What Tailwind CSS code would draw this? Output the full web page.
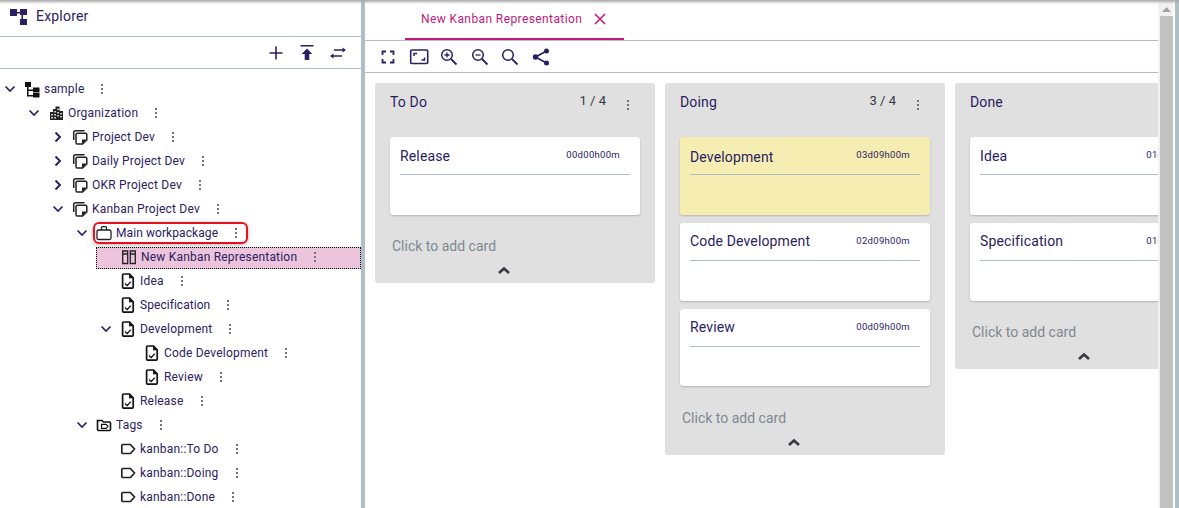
<!DOCTYPE html>
<html lang="en">
<head>
<meta charset="utf-8">
<title>Kanban</title>
<script src="https://cdn.jsdelivr.net/npm/@tailwindcss/browser@4"></script>
</head>
<body class="bg-white overflow-hidden">
<svg width="0" height="0" class="absolute">
  <defs>
    <symbol id="down" viewBox="0 0 12 12"><path d="M1.500 3.500 6 8l4.500-4.500" fill="none" stroke="#2b2162" stroke-width="1.700"/></symbol>
    <symbol id="right" viewBox="0 0 12 12"><path d="M3.500 1.500 8 6l-4.500 4.500" fill="none" stroke="#2b2162" stroke-width="2"/></symbol>
    <symbol id="dots" viewBox="0 0 4 12"><rect x="1" y="1" width="2" height="2" fill="#757575"/><rect x="1" y="5" width="2" height="2" fill="#757575"/><rect x="1" y="9" width="2" height="2" fill="#757575"/></symbol>
    <symbol id="project" viewBox="0 0 16 16"><g fill="none" stroke="#212121" stroke-width="1.500"><path d="M12.500 1.700H3.500Q1.700 1.700 1.700 3.500V11"/><path d="M4 8V5.500Q4 4.200 5.300 4.200H13.500Q14.800 4.200 14.800 5.500V11L10.500 15H5.300Q4 15 4 13.700V8Z"/></g><path d="M10 15v-4.500h4.800Z" fill="#212121"/></symbol>
    <symbol id="task" viewBox="0 0 16 16"><path d="M3.800 1H9.500L13.200 4.800V14Q13.200 15.200 12 15.200H3.800Q2.600 15.200 2.600 14V2.200Q2.600 1 3.800 1Z" fill="none" stroke="#111" stroke-width="1.700"/><path d="M9 1v4.300h4.300Z" fill="#111"/><path d="M5 10.500 7.100 12.500 11 8.600" fill="none" stroke="#111" stroke-width="1.300"/></symbol>
    <symbol id="tag" viewBox="0 0 16 16"><path d="M2.800 3.500H10.500L14.500 8 10.500 12.500H2.800Q1.800 12.500 1.800 11.500V4.500Q1.800 3.500 2.800 3.500Z" fill="none" stroke="#212121" stroke-width="1.700"/></symbol>
    <symbol id="chev-up" viewBox="0 0 14 10"><path d="M2 8 7 3.500 12 8" fill="none" stroke="#37373f" stroke-width="2.600"/></symbol>
  </defs>
</svg>

<div class="relative flex h-[508px] w-[1179px] overflow-hidden font-['Roboto',sans-serif] text-[#2b2162]">
  <div class="absolute inset-x-0 top-0 z-10 h-1 bg-gradient-to-b from-[#a8a8a8] to-white/0"></div>

  <!-- Left panel -->
  <aside class="flex h-full w-[361px] shrink-0 flex-col">
    <div class="flex h-[37px] shrink-0 items-center border-b border-[#b0bec5] pb-[3px] pl-[9px]">
      <svg width="18" height="18" viewBox="0 0 18 18" class="shrink-0">
        <path d="M1 1h7v7h-7z M11 1h7v6h-7z M11 11h7v6h-7z M8 4h3v1.500H8z M12.500 7h1.500v4h-1.500z" fill="#2b2162"/>
      </svg>
      <span class="mb-[2px] ml-[9px] text-sm tracking-[0.2px]">Explorer</span>
    </div>
    <div class="flex h-8 shrink-0 items-center justify-end gap-[15px] border-b border-[#b0bec5] pr-[15px]">
      <svg width="16" height="16" viewBox="0 0 16 16"><path d="M8 1.500v13M1.500 8h13" stroke="#2b2162" stroke-width="1.600"/></svg>
      <svg width="16" height="16" viewBox="0 0 16 16"><path d="M1.500 0h13v1.600h-13zM8 3.500l5.300 5.500H10.300V15H5.700V9H2.700Z" fill="#2b2162"/></svg>
      <svg width="16" height="16" viewBox="0 0 16 16"><path d="M4 5h9M3 11h9" stroke="#2b2162" stroke-width="1.600"/><path d="M12.500 2.500 16 5l-3.500 2.500ZM3.500 8.500 0 11l3.500 2.500Z" fill="#2b2162"/></svg>
    </div>

    <div class="flex min-h-0 flex-col pt-2 text-xs tracking-[0.2px]">
      <!-- sample -->
      <div class="flex h-6 shrink-0 items-center pl-1">
        <svg width="12" height="12" class="shrink-0"><use href="#down"/></svg>
        <svg width="16" height="17" viewBox="0 0 16 17" class="ml-2 shrink-0"><path d="M1 1h6v5H1zM9 6.500h6.500v5H9zM9 12h6.500v4.500H9zM3 6h1.500v8H9v1.500H3zM4.500 8.500H9V10H4.500z" fill="#111"/></svg>
        <span class="ml-1">sample</span><svg width="4" height="12" class="ml-4 shrink-0"><use href="#dots"/></svg>
      </div>
      <!-- Organization -->
      <div class="flex h-6 shrink-0 items-center pl-7">
        <svg width="12" height="12" class="shrink-0"><use href="#down"/></svg>
        <svg width="16" height="16" viewBox="0 0 16 16" class="ml-2 shrink-0"><path d="M2 7h3V4h2.500V1.500h4V6H15v9H2ZM3.300 9v1.500h1.500V9ZM3.300 12v1.500h1.500V12ZM6.300 6v1.500h1.500V6ZM6.300 9v1.500h1.500V9ZM6.300 12v1.500h1.500V12ZM9.300 3.500V5h1.500V3.500ZM9.300 7v1.500h1.500V7ZM9.300 10v1.500h1.500V10ZM12.300 8v1.500h1.500V8ZM12.300 11v1.500h1.500V11Z" fill="#212121" fill-rule="evenodd"/></svg>
        <span class="ml-1">Organization</span><svg width="4" height="12" class="ml-4 shrink-0"><use href="#dots"/></svg>
      </div>
      <!-- Projects -->
      <div class="flex h-6 shrink-0 items-center pl-[52px]">
        <svg width="12" height="12" class="shrink-0"><use href="#right"/></svg>
        <svg width="16" height="16" class="ml-2 shrink-0"><use href="#project"/></svg>
        <span class="ml-1">Project Dev</span><svg width="4" height="12" class="ml-4 shrink-0"><use href="#dots"/></svg>
      </div>
      <div class="flex h-6 shrink-0 items-center pl-[52px]">
        <svg width="12" height="12" class="shrink-0"><use href="#right"/></svg>
        <svg width="16" height="16" class="ml-2 shrink-0"><use href="#project"/></svg>
        <span class="ml-1">Daily Project Dev</span><svg width="4" height="12" class="ml-4 shrink-0"><use href="#dots"/></svg>
      </div>
      <div class="flex h-6 shrink-0 items-center pl-[52px]">
        <svg width="12" height="12" class="shrink-0"><use href="#right"/></svg>
        <svg width="16" height="16" class="ml-2 shrink-0"><use href="#project"/></svg>
        <span class="ml-1">OKR Project Dev</span><svg width="4" height="12" class="ml-4 shrink-0"><use href="#dots"/></svg>
      </div>
      <div class="flex h-6 shrink-0 items-center pl-[52px]">
        <svg width="12" height="12" class="shrink-0"><use href="#down"/></svg>
        <svg width="16" height="16" class="ml-2 shrink-0"><use href="#project"/></svg>
        <span class="ml-1">Kanban Project Dev</span><svg width="4" height="12" class="ml-4 shrink-0"><use href="#dots"/></svg>
      </div>
      <!-- Main workpackage -->
      <div class="flex h-6 shrink-0 items-center pl-[76px]">
        <svg width="12" height="12" class="shrink-0"><use href="#down"/></svg>
        <div class="relative ml-2 flex items-center">
          <div class="absolute -left-[3px] -right-[10px] -top-[3px] h-[22px] rounded-md border-2 border-[#e8101c] shadow-[0_1px_4px_rgba(0,0,0,0.3)]"></div>
          <svg width="16" height="16" viewBox="0 0 16 16" class="shrink-0"><path d="M2.500 5H13.500Q15 5 15 6.500V13Q15 14.500 13.500 14.500H2.500Q1 14.500 1 13V6.500Q1 5 2.500 5ZM5.500 5V2.800Q5.500 1.700 6.600 1.700H9.400Q10.500 1.700 10.500 2.800V5" fill="none" stroke="#212121" stroke-width="1.300"/></svg>
          <span class="ml-1 tracking-[0.08px]">Main workpackage</span><svg width="4" height="12" class="ml-4 shrink-0"><use href="#dots"/></svg>
        </div>
      </div>
      <!-- Selected -->
      <div class="flex h-6 shrink-0 items-start pl-24">
        <div class="mt-[2px] flex h-[22px] flex-1 items-center border border-dotted border-black bg-[#ecc5dd] pb-[2px] pl-6">
          <svg width="16" height="16" viewBox="0 0 16 16" class="shrink-0"><path d="M1.700 2h5v12.500h-5zM9.300 2h5v12.500h-5zM1.700 5h5M9.300 5h5" fill="none" stroke="#212121" stroke-width="1.300"/></svg>
          <span class="ml-1">New Kanban Representation</span><svg width="4" height="12" class="ml-4 shrink-0"><use href="#dots"/></svg>
        </div>
      </div>
      <!-- Tasks -->
      <div class="flex h-6 shrink-0 items-center pl-[120px]">
        <svg width="16" height="16" class="shrink-0"><use href="#task"/></svg>
        <span class="ml-1">Idea</span><svg width="4" height="12" class="ml-4 shrink-0"><use href="#dots"/></svg>
      </div>
      <div class="flex h-6 shrink-0 items-center pl-[120px]">
        <svg width="16" height="16" class="shrink-0"><use href="#task"/></svg>
        <span class="ml-1 tracking-[0.05px]">Specification</span><svg width="4" height="12" class="ml-4 shrink-0"><use href="#dots"/></svg>
      </div>
      <div class="flex h-6 shrink-0 items-center pl-[100px]">
        <svg width="12" height="12" class="shrink-0"><use href="#down"/></svg>
        <svg width="16" height="16" class="ml-2 shrink-0"><use href="#task"/></svg>
        <span class="ml-1">Development</span><svg width="4" height="12" class="ml-4 shrink-0"><use href="#dots"/></svg>
      </div>
      <div class="flex h-6 shrink-0 items-center pl-[144px]">
        <svg width="16" height="16" class="shrink-0"><use href="#task"/></svg>
        <span class="ml-1">Code Development</span><svg width="4" height="12" class="ml-4 shrink-0"><use href="#dots"/></svg>
      </div>
      <div class="flex h-6 shrink-0 items-center pl-[144px]">
        <svg width="16" height="16" class="shrink-0"><use href="#task"/></svg>
        <span class="ml-1">Review</span><svg width="4" height="12" class="ml-4 shrink-0"><use href="#dots"/></svg>
      </div>
      <div class="flex h-6 shrink-0 items-center pl-[120px]">
        <svg width="16" height="16" class="shrink-0"><use href="#task"/></svg>
        <span class="ml-1">Release</span><svg width="4" height="12" class="ml-4 shrink-0"><use href="#dots"/></svg>
      </div>
      <!-- Tags -->
      <div class="flex h-6 shrink-0 items-center pl-[76px]">
        <svg width="12" height="12" class="shrink-0"><use href="#down"/></svg>
        <svg width="16" height="16" viewBox="0 0 16 16" class="ml-2 shrink-0"><path d="M1.500 3.500H6L7.500 5H13.500Q14.500 5 14.500 6V12.500Q14.500 13.500 13.500 13.500H2.500Q1.500 13.500 1.500 12.500Z" fill="none" stroke="#111" stroke-width="1.600"/><path d="M5.500 7.300H10L12 9.300 10 11.300H5.500Z" fill="none" stroke="#111" stroke-width="1.200"/></svg>
        <span class="ml-1">Tags</span><svg width="4" height="12" class="ml-4 shrink-0"><use href="#dots"/></svg>
      </div>
      <div class="flex h-6 shrink-0 items-center pl-[120px]">
        <svg width="16" height="16" class="shrink-0"><use href="#tag"/></svg>
        <span class="ml-1">kanban::To Do</span><svg width="4" height="12" class="ml-4 shrink-0"><use href="#dots"/></svg>
      </div>
      <div class="flex h-6 shrink-0 items-center pl-[120px]">
        <svg width="16" height="16" class="shrink-0"><use href="#tag"/></svg>
        <span class="ml-1">kanban::Doing</span><svg width="4" height="12" class="ml-4 shrink-0"><use href="#dots"/></svg>
      </div>
      <div class="flex h-6 shrink-0 items-center pl-[120px]">
        <svg width="16" height="16" class="shrink-0"><use href="#tag"/></svg>
        <span class="ml-1">kanban::Done</span><svg width="4" height="12" class="ml-4 shrink-0"><use href="#dots"/></svg>
      </div>
    </div>
  </aside>

  <!-- Divider -->
  <div class="h-full w-1 shrink-0 bg-[#b0bec5]"></div>

  <!-- Right panel -->
  <main class="flex h-full w-[793px] shrink-0 flex-col overflow-hidden">
    <div class="flex h-[41px] shrink-0 border-b border-[#b0bec5] pl-10">
      <div class="flex h-10 w-[219px] items-center gap-3 border-b-2 border-[#c2187a] pb-[1px] pl-4 text-xs tracking-[0.4px] text-[#c2187a]">
        <span>New Kanban Representation</span>
        <svg width="12" height="12" viewBox="0 0 12 12"><path d="M1 1l10 10M11 1 1 11" stroke="#c2187a" stroke-width="1.500"/></svg>
      </div>
    </div>
    <div class="flex h-8 shrink-0 items-center border-b border-[#b0bec5] pl-[15px]">
      <svg width="16" height="16" viewBox="0 0 16 16" class="shrink-0"><path d="M2.500 6V2.500H6M10 2.500h3.500V6M13.500 10v3.500H10M6 13.500H2.500V10" fill="none" stroke="#2b2162" stroke-width="1.800"/></svg>
      <svg width="20" height="16" viewBox="0 0 20 16" class="ml-[13px] shrink-0"><rect x="1.700" y="1" width="17" height="13.500" rx="1" fill="none" stroke="#2b2162" stroke-width="1.600"/><path d="M5 7V4.500h3M15.500 8.500v2.500h-3" fill="none" stroke="#2b2162" stroke-width="1.500"/></svg>
      <svg width="18" height="18" viewBox="0 0 18 18" class="ml-[11px] shrink-0"><circle cx="7" cy="7" r="5.300" fill="none" stroke="#2b2162" stroke-width="1.500"/><path d="M11 11l5.500 5.500" stroke="#2b2162" stroke-width="1.800"/><path d="M4.500 7h5M7 4.500v5" stroke="#2b2162" stroke-width="1.300"/></svg>
      <svg width="18" height="18" viewBox="0 0 18 18" class="ml-[13px] shrink-0"><circle cx="7" cy="7" r="5.300" fill="none" stroke="#2b2162" stroke-width="1.500"/><path d="M11 11l5.500 5.500" stroke="#2b2162" stroke-width="1.800"/><path d="M4.500 7h5" stroke="#2b2162" stroke-width="1.300"/></svg>
      <svg width="18" height="18" viewBox="0 0 18 18" class="ml-3 shrink-0"><circle cx="7" cy="7" r="5.300" fill="none" stroke="#2b2162" stroke-width="1.500"/><path d="M11 11l5.500 5.500" stroke="#2b2162" stroke-width="1.800"/></svg>
      <svg width="18" height="18" viewBox="0 0 18 18" class="ml-[13px] shrink-0"><path d="M14.500 3 3.500 9l11 6" fill="none" stroke="#2b2162" stroke-width="1.700"/><circle cx="14.500" cy="3" r="2.500" fill="#2b2162"/><circle cx="3.500" cy="9" r="2.700" fill="#2b2162"/><circle cx="14.500" cy="15" r="2.500" fill="#2b2162"/></svg>
    </div>

    <div class="flex min-h-0 flex-1 items-start gap-[10px] pl-[10px] pt-[10px]">
      <!-- To Do -->
      <section class="w-[280px] shrink-0 rounded-[3px] bg-[#e0e0e0]">
        <div class="flex h-[54px] items-start pl-[15px] pr-[25px] pt-[9px] text-sm tracking-[0.15px]">
          <span class="flex-1">To Do</span><span class="text-[13px] tracking-normal text-[#37373f]">1 / 4</span>
          <svg width="4" height="12" class="ml-[20px] mt-[7px] shrink-0"><use href="#dots"/></svg>
        </div>
        <div class="flex flex-col gap-2 px-[15px]">
          <div class="h-[77.8px] rounded-[3px] bg-white px-[10px] shadow-[0_1px_2px_rgba(0,0,0,0.2)]">
            <div class="flex h-[38px] items-center justify-between border-b border-[#b0bec5]"><span class="text-sm tracking-[0.15px]">Release</span><span class="mr-[10px] text-[9.500px] tracking-[0.3px]">00d00h00m</span></div>
          </div>
        </div>
        <div class="pl-[17px] pt-[23.7px] text-sm leading-4 text-[#7f8890]">Click to add card</div>
        <div class="flex h-[29px] items-start justify-center pr-[22px] pt-[11px]"><svg width="14" height="10"><use href="#chev-up"/></svg></div>
      </section>
      <!-- Doing -->
      <section class="w-[280px] shrink-0 rounded-[3px] bg-[#e0e0e0]">
        <div class="flex h-[54px] items-start pl-[15px] pr-[25px] pt-[9px] text-sm tracking-[0.15px]">
          <span class="flex-1">Doing</span><span class="text-[13px] tracking-normal text-[#37373f]">3 / 4</span>
          <svg width="4" height="12" class="ml-[20px] mt-[7px] shrink-0"><use href="#dots"/></svg>
        </div>
        <div class="flex flex-col gap-2 px-[15px]">
          <div class="h-[77.8px] rounded-[3px] bg-[#f6edb3] px-[10px] shadow-[0_1px_2px_rgba(0,0,0,0.2)]">
            <div class="flex h-[38px] items-center justify-between border-b border-[#b0bec5]"><span class="mt-[2px] text-sm tracking-[0.15px]">Development</span><span class="mr-[10px] text-[9.500px] tracking-[0.3px]">03d09h00m</span></div>
          </div>
          <div class="h-[77.8px] rounded-[3px] bg-white px-[10px] shadow-[0_1px_2px_rgba(0,0,0,0.2)]">
            <div class="flex h-[38px] items-center justify-between border-b border-[#b0bec5]"><span class="text-sm tracking-[0.15px]">Code Development</span><span class="mr-[10px] text-[9.500px] tracking-[0.3px]">02d09h00m</span></div>
          </div>
          <div class="h-[77.8px] rounded-[3px] bg-white px-[10px] shadow-[0_1px_2px_rgba(0,0,0,0.2)]">
            <div class="flex h-[38px] items-center justify-between border-b border-[#b0bec5]"><span class="text-sm tracking-[0.15px]">Review</span><span class="mr-[10px] text-[9.500px] tracking-[0.3px]">00d09h00m</span></div>
          </div>
        </div>
        <div class="pl-[17px] pt-[23.7px] text-sm leading-4 text-[#7f8890]">Click to add card</div>
        <div class="flex h-[29px] items-start justify-center pr-[22px] pt-[11px]"><svg width="14" height="10"><use href="#chev-up"/></svg></div>
      </section>
      <!-- Done -->
      <section class="w-[280px] shrink-0 rounded-[3px] bg-[#e0e0e0]">
        <div class="flex h-[54px] items-start pl-[15px] pr-[25px] pt-[9px] text-sm tracking-[0.15px]">
          <span class="flex-1">Done</span><span class="text-[13px] tracking-normal text-[#37373f]">2 / 4</span>
          <svg width="4" height="12" class="ml-[20px] mt-[7px] shrink-0"><use href="#dots"/></svg>
        </div>
        <div class="flex flex-col gap-2 px-[15px]">
          <div class="h-[77.8px] rounded-[3px] bg-white px-[10px] shadow-[0_1px_2px_rgba(0,0,0,0.2)]">
            <div class="flex h-[38px] items-center justify-between border-b border-[#b0bec5]"><span class="text-sm tracking-[0.15px]">Idea</span><span class="mr-[10px] text-[9.500px] tracking-[0.3px]">01d09h00m</span></div>
          </div>
          <div class="h-[77.8px] rounded-[3px] bg-white px-[10px] shadow-[0_1px_2px_rgba(0,0,0,0.2)]">
            <div class="flex h-[38px] items-center justify-between border-b border-[#b0bec5]"><span class="text-sm tracking-[0.15px]">Specification</span><span class="mr-[10px] text-[9.500px] tracking-[0.3px]">01d09h00m</span></div>
          </div>
        </div>
        <div class="pl-[17px] pt-[23.7px] text-sm leading-4 text-[#7f8890]">Click to add card</div>
        <div class="flex h-[29px] items-start justify-center pr-[22px] pt-[11px]"><svg width="14" height="10"><use href="#chev-up"/></svg></div>
      </section>
    </div>
  </main>

  <!-- Scrollbar -->
  <div class="flex h-full w-[17px] shrink-0 flex-col bg-[#f1f1f1] px-[2px]">
    <div class="flex h-[16px] shrink-0 items-center justify-center pt-[2px]"><svg width="9" height="5"><path d="M0 5 4.500 0 9 5Z" fill="#a3a3a3"/></svg></div>
    <div class="flex-1 bg-[#c1c1c1]"></div>
  </div>
  <div class="absolute inset-y-0 right-[4px] w-[2px] bg-white"></div>
  <div class="absolute inset-y-0 right-0 w-1 bg-[#b0bec5]"></div>
</div>
</body>
</html>
